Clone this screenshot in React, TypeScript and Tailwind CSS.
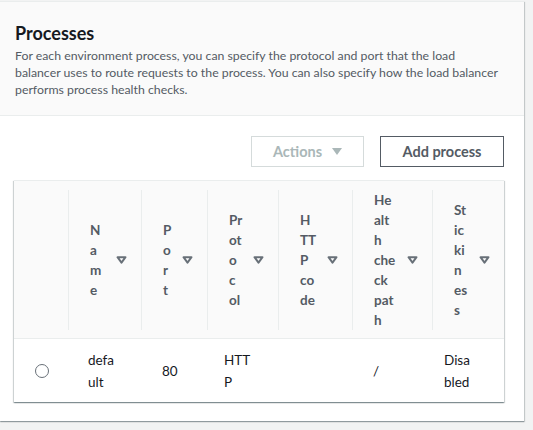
import React from "react";

function Caret() {
  return (
    <svg width="11" height="8" viewBox="0 0 11 8" className="shrink-0">
      <path d="M1.5 1.2 L9.5 1.2 L5.5 6.6 Z" fill="#ffffff" stroke="#687078" strokeWidth="2" strokeLinejoin="round" />
    </svg>
  );
}

function HeadCell({ lines, sep = true }: { lines: string[]; sep?: boolean }) {
  return (
    <div className="py-[9px] pb-[10px] h-full">
      <div className={`h-full flex items-center justify-between pl-[21px] pr-[14px] ${sep ? "border-l border-[#eaeded]" : ""}`}>
        <div className="flex flex-col leading-[20px] font-bold text-[13.5px] text-[#545b64]">
          {lines.map((l, i) => (
            <span key={i}>{l}</span>
          ))}
        </div>
        <Caret />
      </div>
    </div>
  );
}

export default function App() {
  return (
    <div className="min-h-screen bg-[#f2f3f3] pt-px" style={{ fontFamily: "Lato, 'Liberation Sans', sans-serif" }}>
      <div className="w-[524px] bg-white border-t border-[#eaeded] shadow-[0_1px_1px_0_rgba(0,28,36,0.3),1px_1px_1px_0_rgba(0,28,36,0.15)]">
        <div className="bg-[#fafafa] border-b border-[#eaeded] h-[114px] px-[15px] pt-[20px]">
          <h2 className="text-[18px] font-bold leading-[22px] text-[#16191f]">Processes</h2>
          <p className="mt-[3px] w-[484px] text-[12.3px] leading-[17px] text-[#545b64]">
            For each environment process, you can specify the protocol and port that the load balancer uses to route requests to the process. You can also specify how the load balancer performs process health checks.
          </p>
        </div>
        <div className="pl-[14px] pr-[20px] pt-[20px] pb-[19px]">
          <div className="flex justify-end gap-[16px]">
            <button className="w-[113px] h-[31px] border border-[#d5dbdb] bg-white text-[#aab7b8] font-bold text-[14.5px] flex items-center justify-center gap-[10px]">
              Actions
              <svg width="10" height="7" viewBox="0 0 10 7"><path d="M0 0 L10 0 L5 7 Z" fill="#aab7b8" /></svg>
            </button>
            <button className="w-[124px] h-[31px] border border-[#545b64] bg-white text-[#545b64] font-bold text-[14.5px]">
              Add process
            </button>
          </div>
          <div className="mt-[13px] border-t border-[#eaeded] shadow-[0_1px_1px_0_rgba(0,28,36,0.3),1px_1px_1px_0_rgba(0,28,36,0.15),-1px_1px_1px_0_rgba(0,28,36,0.15)] bg-white">
            <div className="grid grid-cols-[54px_73px_66px_71px_74px_80px_72px] h-[158px] bg-[#fafafa] border-b border-[#eaeded]">
              <div />
              <HeadCell lines={["N", "a", "m", "e"]} />
              <HeadCell lines={["P", "o", "r", "t"]} />
              <HeadCell lines={["Pr", "ot", "o", "c", "ol"]} />
              <HeadCell lines={["H", "TT", "P", "co", "de"]} />
              <HeadCell lines={["He", "alt", "h", "che", "ck", "pat", "h"]} />
              <HeadCell lines={["St", "ic", "ki", "n", "es", "s"]} />
            </div>
            <div className="grid grid-cols-[54px_73px_66px_71px_74px_80px_72px] h-[63px] items-center text-[13.5px] leading-[22px] text-[#16191f]">
              <div className="flex justify-center">
                <span className="w-[14px] h-[14px] rounded-full border-[1.5px] border-[#687078] bg-white ml-[2px]" />
              </div>
              <div className="pl-[20px] flex flex-col"><span>defa</span><span>ult</span></div>
              <div className="pl-[21px]">80</div>
              <div className="pl-[17px] flex flex-col"><span>HTT</span><span>P</span></div>
              <div />
              <div className="pl-[21px]">/</div>
              <div className="pl-[12px] flex flex-col"><span>Disa</span><span>bled</span></div>
            </div>
          </div>
        </div>
      </div>
    </div>
  );
}
